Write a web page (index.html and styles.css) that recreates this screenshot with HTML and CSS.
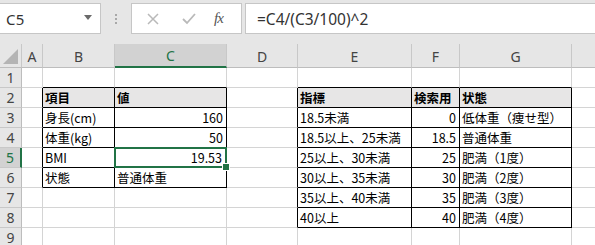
FILE: index.html
```html
<!DOCTYPE html>
<html lang="ja">
<head>
<meta charset="utf-8">
<link rel="stylesheet" href="styles.css">
</head>
<body>
<div class="fbar">
  <div class="namebox"><span class="nb-text">C5</span><span class="nb-arrow"></span></div>
  <div class="dots"><i></i><i></i><i></i></div>
  <div class="btns">
    <svg class="ico" width="14" height="14" viewBox="0 0 14 14"><path d="M2 2 L12 12 M12 2 L2 12" stroke="#b9b9b9" stroke-width="1.5" fill="none"/></svg>
    <svg class="ico" width="16" height="14" viewBox="0 0 16 14"><path d="M2 7 L6 11 L14 2" stroke="#b9b9b9" stroke-width="1.8" fill="none"/></svg>
    <span class="fx">fx</span>
  </div>
  <div class="formula">=C4/(C3/100)^2</div>
</div>
<div class="sheet">
  <div class="corner"><span class="tri"></span></div>
  <div class="ch">A</div><div class="ch">B</div><div class="ch sel">C</div><div class="ch">D</div><div class="ch">E</div><div class="ch">F</div><div class="ch">G</div><div class="ch"></div>

  <div class="rh">1</div>
  <div class="c"></div><div class="c tb"></div><div class="c tb"></div><div class="c"></div><div class="c tb"></div><div class="c tb"></div><div class="c tb"></div><div class="c"></div>

  <div class="rh">2</div>
  <div class="c tr"></div><div class="c t hd">項目</div><div class="c t hd">値</div><div class="c tr"></div><div class="c t hd">指標</div><div class="c t hd">検索用</div><div class="c t hd">状態</div><div class="c"></div>

  <div class="rh">3</div>
  <div class="c tr"></div><div class="c t">身長(cm)</div><div class="c t num">160</div><div class="c tr"></div><div class="c t">18.5未満</div><div class="c t num">0</div><div class="c t">低体重（痩せ型）</div><div class="c"></div>

  <div class="rh">4</div>
  <div class="c tr"></div><div class="c t">体重(kg)</div><div class="c t num">50</div><div class="c tr"></div><div class="c t">18.5以上、25未満</div><div class="c t num">18.5</div><div class="c t">普通体重</div><div class="c"></div>

  <div class="rh sel">5</div>
  <div class="c tr"></div><div class="c t">BMI</div><div class="c t num active">19.53</div><div class="c tr"></div><div class="c t">25以上、30未満</div><div class="c t num">25</div><div class="c t">肥満（1度）</div><div class="c"></div>

  <div class="rh">6</div>
  <div class="c tr"></div><div class="c t">状態</div><div class="c t">普通体重</div><div class="c tr"></div><div class="c t">30以上、35未満</div><div class="c t num">30</div><div class="c t">肥満（2度）</div><div class="c"></div>

  <div class="rh">7</div>
  <div class="c"></div><div class="c"></div><div class="c"></div><div class="c tr"></div><div class="c t">35以上、40未満</div><div class="c t num">35</div><div class="c t">肥満（3度）</div><div class="c"></div>

  <div class="rh">8</div>
  <div class="c"></div><div class="c"></div><div class="c"></div><div class="c tr"></div><div class="c t">40以上</div><div class="c t num">40</div><div class="c t">肥満（4度）</div><div class="c"></div>

  <div class="rh">9</div>
  <div class="c"></div><div class="c"></div><div class="c"></div><div class="c"></div><div class="c"></div><div class="c"></div><div class="c"></div><div class="c"></div>
</div>
</body>
</html>
```

FILE: styles.css
```css
* { box-sizing: border-box; }
html, body { margin: 0; padding: 0; }
body {
  width: 595px;
  height: 245px;
  overflow: hidden;
  background: #ffffff;
  font-family: "Noto Sans CJK JP", "Noto Sans", sans-serif;
}
.fbar {
  height: 44px;
  background: #e6e6e6;
  display: flex;
  align-items: flex-start;
  padding-top: 3px;
}
.namebox {
  width: 101px;
  height: 31px;
  background: #fff;
  border: 1px solid #c6c6c6;
  border-left: none;
  display: flex;
  align-items: center;
  justify-content: space-between;
  padding: 0 8px 0 6px;
}
.nb-text {
  font-family: "Noto Sans", "DejaVu Sans", sans-serif;
  font-size: 15px;
  color: #333;
  letter-spacing: 0.3px;
}
.nb-arrow {
  width: 0; height: 0;
  border-left: 4px solid transparent;
  border-right: 4px solid transparent;
  border-top: 5px solid #6a6a6a;
  margin-top: -3px;
}
.dots {
  width: 30px;
  height: 31px;
  display: flex;
  flex-direction: column;
  align-items: center;
  justify-content: center;
  gap: 2px;
}
.dots i {
  display: block;
  width: 2px; height: 2px;
  background: #a8a8a8;
}
.btns {
  width: 111px;
  height: 31px;
  background: #fff;
  border: 1px solid #c6c6c6;
  display: flex;
  align-items: center;
  padding-left: 14px;
  gap: 0;
}
.btns .ico:first-child { margin-right: 21px; }
.btns .ico:nth-child(2) { margin-right: 17px; }
.fx {
  font-family: "Liberation Serif", "DejaVu Serif", serif;
  font-style: italic;
  font-size: 15px;
  color: #555;
  letter-spacing: -1px;
}
.formula {
  margin-left: 3px;
  flex: 1;
  height: 31px;
  background: #fff;
  border: 1px solid #c6c6c6;
  border-right: none;
  padding-left: 11px;
  display: flex;
  align-items: center;
  font-family: "Noto Sans", "DejaVu Sans", sans-serif;
  font-size: 15.5px;
  color: #333;
}
.sheet {
  display: grid;
  grid-template-columns: 22px 21px 72px 112px 71px 114px 48px 112px 40px;
  grid-template-rows: 24px repeat(9, 20px);
}
.corner {
  background: #e6e6e6;
  border-right: 1px solid #c8c8c8;
  border-bottom: 1px solid #bdbdbd;
  position: relative;
}
.tri {
  position: absolute;
  right: 3px; bottom: 3px;
  width: 0; height: 0;
  border-left: 15px solid transparent;
  border-bottom: 15px solid #b4b4b4;
}
.ch {
  background: #e6e6e6;
  border-right: 1px solid #c8c8c8;
  border-bottom: 1px solid #bdbdbd;
  display: flex;
  align-items: center;
  justify-content: center;
  font-family: "Noto Sans", "DejaVu Sans", sans-serif;
  font-size: 14px;
  color: #444;
  padding-top: 1px;
}
.ch.sel {
  background: #d2d2d2;
  border-bottom: 2px solid #217346;
  color: #217346;
}
.rh {
  background: #e6e6e6;
  border-right: 1px solid #bdbdbd;
  border-bottom: 1px solid #c8c8c8;
  display: flex;
  align-items: center;
  justify-content: center;
  font-family: "Noto Sans", "DejaVu Sans", sans-serif;
  font-size: 14px;
  color: #444;
}
.rh.sel {
  background: #d2d2d2;
  border-right: 2px solid #217346;
  color: #217346;
}
.c {
  border-right: 1px solid #d4d4d4;
  border-bottom: 1px solid #d4d4d4;
  font-size: 12.5px;
  color: #000;
  padding: 0 2px 0 2px;
  display: flex;
  align-items: center;
  white-space: nowrap;
  line-height: 19px;
}
.c.t { border-right-color: #000; border-bottom-color: #000; }
.c.tr { border-right-color: #000; }
.c.tb { border-bottom-color: #000; }
.c.hd { background: #e7e6e6; font-weight: bold; }
.c.num { justify-content: flex-end; padding-right: 3px; }
.c.active { position: relative; padding-right: 4px; }
.c.active::before {
  content: "";
  position: absolute;
  left: -1px; top: -1px; right: -1px; bottom: -1px;
  border: 2px solid #217346;
}
.c.active::after {
  content: "";
  position: absolute;
  right: -4px; bottom: -4px;
  width: 6px; height: 6px;
  background: #217346;
  border: 1px solid #fff;
}
```
